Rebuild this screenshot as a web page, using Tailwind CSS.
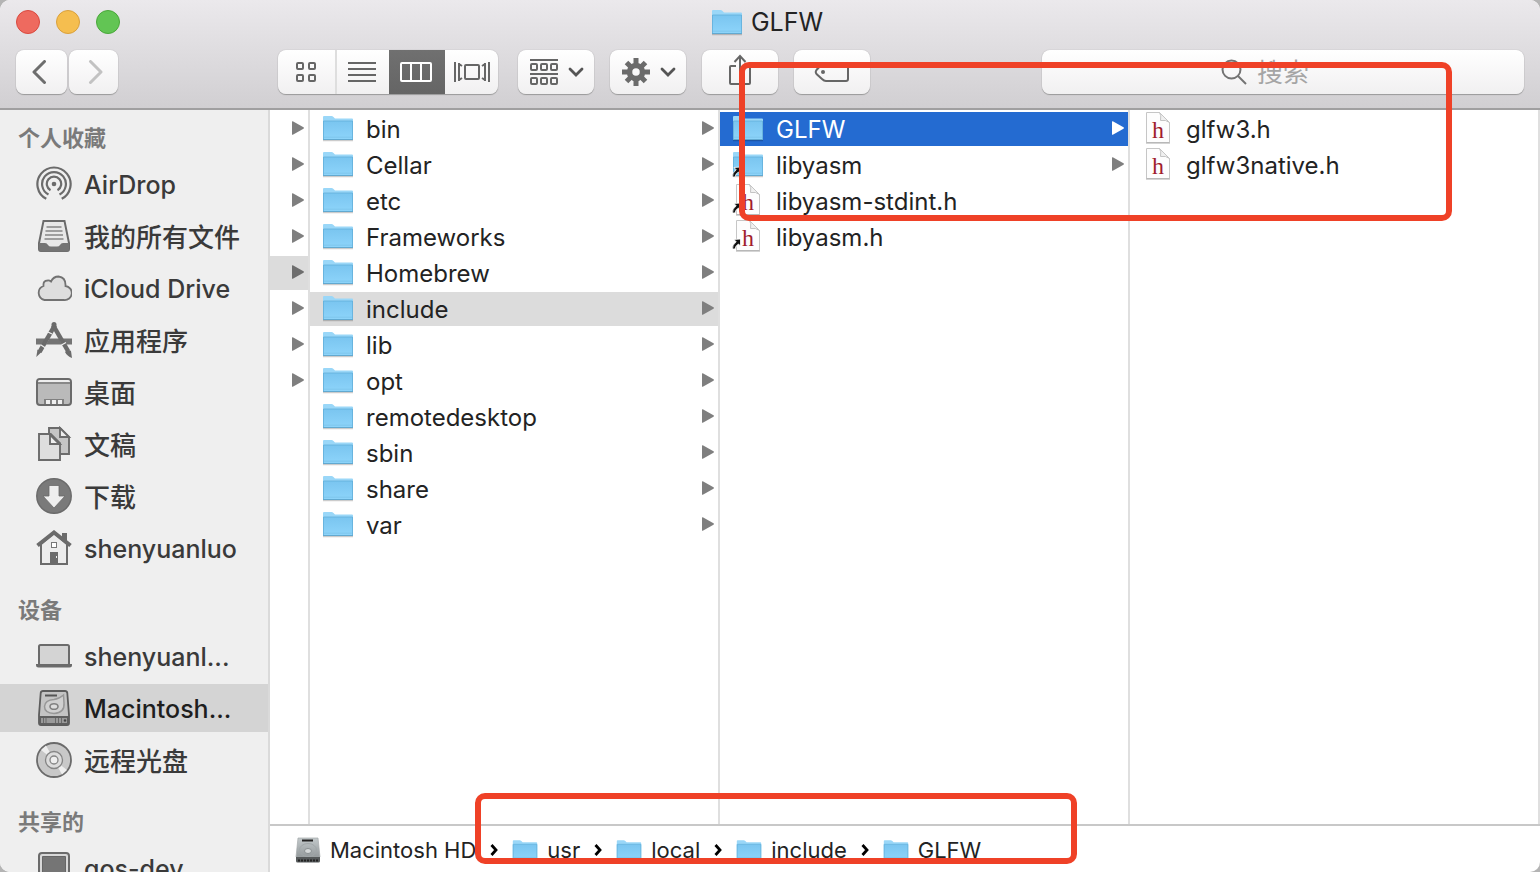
<!DOCTYPE html>
<html lang="zh-CN">
<head>
<meta charset="utf-8">
<title>GLFW</title>
<script src="https://cdn.jsdelivr.net/npm/@tailwindcss/browser@4"></script>
</head>
<body class="bg-[#b4b4b4] font-['Inter','Noto_Sans_CJK_SC',sans-serif] text-[#232323]">
<svg class="absolute size-0" aria-hidden="true">
  <defs>
    <linearGradient id="fg" x1="0" y1="0" x2="0" y2="1"><stop offset="0" stop-color="#7ac5f0"/><stop offset="1" stop-color="#8dd4fa"/></linearGradient>
    <linearGradient id="hdg" x1="0" y1="0" x2="0" y2="1"><stop offset="0" stop-color="#c3c9cb"/><stop offset="1" stop-color="#949a9c"/></linearGradient>
  </defs>
  <symbol id="folder" viewBox="0 0 32 28">
    <path d="M1 26.500H31" stroke="#000" stroke-opacity=".2" stroke-width="1.500"/>
    <path d="M1 3Q1 2 2 2H9.500Q10.500 2 11.500 3L13 4.500H30Q31 4.500 31 5.500V25H1Z" fill="#9ad7f8"/>
    <path d="M1 7H31V25.500H1Z" fill="url(#fg)"/>
    <path d="M1.500 25V7H30.500V25" fill="none" stroke="#62afd9" stroke-width=".8"/>
    <path d="M1 25.500H31" stroke="#62a9d0"/>
    <path d="M2 23.200H30" stroke="#78c1e9" stroke-width=".7"/>
  </symbol>
  <symbol id="hfile" viewBox="0 2 32 32">
    <path d="M4.500 2.500H17.500L27.500 12.500V32.500H4.500Z" fill="#fdfdfd" stroke="#c6c6c6"/>
    <path d="M4 33H28" stroke="#aaa" stroke-width="1"/>
    <path d="M17.500 2.500Q19.500 5 18.500 10.500Q24 9.500 27.500 12.500Z" fill="#f0f0f0" stroke="#c4c4c4"/>
    <text x="16" y="28" text-anchor="middle" font-family="Liberation Serif, serif" font-size="24" fill="#a01c2c">h</text>
  </symbol>
  <symbol id="alias" viewBox="0 0 10 12">
    <path d="M2 1.500L8.500 1V8L6.500 6Q3.500 7.500 3 11H.5Q0 7 4.200 3.800Z" fill="#111" stroke="#fff" stroke-width=".8"/>
  </symbol>
  <symbol id="tri" viewBox="0 0 12 14"><path d="M0 .8Q0 0 .8 .3L11.500 6.300Q12.300 7 11.500 7.700L.8 13.700Q0 14 0 13.200Z" fill="currentColor"/></symbol>
  <symbol id="down" viewBox="0 0 16 10"><path d="M2 2L8 8L14 2" fill="none" stroke="#555" stroke-width="2.800" stroke-linecap="round"/></symbol>
  <symbol id="crumb" viewBox="0 0 8 12"><path d="M1.500 1L6 6L1.500 11" fill="none" stroke="#000" stroke-width="2.800"/></symbol>
</svg>

<div class="relative flex h-screen flex-col overflow-hidden rounded-[10px] bg-white">
  <header class="flex shrink-0 flex-col border-b-2 border-[#a09fa0] bg-linear-to-b from-[#ebe9ec] to-[#d1cfd2] pb-3.5">
    <div class="flex h-11 items-center px-4">
      <div class="flex flex-1 gap-4">
        <button aria-label="关闭" class="size-6 rounded-full border border-[#d9493f] bg-[#ee6a5f]"></button>
        <button aria-label="最小化" class="size-6 rounded-full border border-[#d9a03c] bg-[#f5be4f]"></button>
        <button aria-label="缩放" class="size-6 rounded-full border border-[#49a73a] bg-[#62c554]"></button>
      </div>
      <h1 class="mr-1.5 flex items-center gap-2 pt-0.5 text-[25px]"><svg class="mb-0.5 h-7 w-8"><use href="#folder"/></svg>GLFW</h1>
      <div class="flex-1"></div>
    </div>
    <div class="mt-1.5 flex h-11 items-stretch px-4 *:shrink-0">
      <div class="flex gap-0.5 *:rounded-lg *:bg-linear-to-b *:from-white *:to-[#f1f0f1] *:shadow-[0_1px_1px_#999,0_0_1px_#999]">
        <button aria-label="后退" class="flex w-[51px] items-center justify-center"><svg class="h-6 w-5" viewBox="0 0 20 24" fill="none" stroke="#6e6e6e" stroke-width="3" stroke-linecap="round" stroke-linejoin="round"><path d="M12.500 1.500L2 12L12.500 22.500"/></svg></button>
        <button aria-label="前进" class="flex w-[49px] items-center justify-center"><svg class="h-6 w-5" viewBox="0 0 20 24" fill="none" stroke="#c2c2c2" stroke-width="3" stroke-linecap="round" stroke-linejoin="round"><path d="M6.500 1.500L17 12L6.500 22.500"/></svg></button>
      </div>
      <div class="ml-40 flex w-55 overflow-hidden rounded-lg bg-linear-to-b from-white to-[#f1f0f1] shadow-[0_1px_1px_#999,0_0_1px_#999]">
        <button aria-label="图标" class="flex w-[59px] items-center justify-center border-r-2 border-[#dedede] pr-0.5"><svg class="size-5" viewBox="0 0 20 20" fill="none" stroke="#666" stroke-width="2"><rect x="1" y="1" width="6" height="6" rx="1"/><rect x="13" y="1" width="6" height="6" rx="1"/><rect x="1" y="13" width="6" height="6" rx="1"/><rect x="13" y="13" width="6" height="6" rx="1"/></svg></button>
        <button aria-label="列表" class="flex w-[52px] items-center justify-center pr-0.5"><svg class="h-5 w-7" viewBox="0 0 28 20" stroke="#666" stroke-width="2"><path d="M0 1H28M0 7H28M0 13H28M0 19H28"/></svg></button>
        <button aria-label="分栏" aria-pressed="true" class="flex w-14 items-center justify-center bg-linear-to-b from-[#707070] to-[#656565] pr-0.5"><svg class="h-5 w-8" viewBox="0 0 32 20" fill="none" stroke="#fff" stroke-width="2"><rect x="1" y="1" width="30" height="18" rx="1"/><path d="M11 1V19M21 1V19"/></svg></button>
        <button aria-label="封面流" class="flex flex-1 items-center justify-center"><svg class="h-5 w-9" viewBox="0 0 36 20" fill="none" stroke="#666" stroke-width="2"><path d="M1 0V20M35 0V20M5 1V19M31 1V19M5 2L8 4M5 18L8 16M31 2L28 4M31 18L28 16"/><rect x="11" y="3" width="14" height="14" rx="1"/></svg></button>
      </div>
      <div class="ml-5 flex gap-4 *:flex *:w-[76px] *:items-center *:rounded-lg *:bg-linear-to-b *:from-white *:to-[#f1f0f1] *:shadow-[0_1px_1px_#999,0_0_1px_#999]">
        <button aria-label="排列" class="gap-2.5 pl-3"><svg class="h-[26px] w-7" viewBox="0 0 28 26" fill="none" stroke="#666" stroke-width="2"><path d="M0 1H28M0 15H28"/><rect x="1" y="5" width="6" height="6" rx="1"/><rect x="11" y="5" width="6" height="6" rx="1"/><rect x="21" y="5" width="6" height="6" rx="1"/><rect x="1" y="19" width="6" height="6" rx="1"/><rect x="11" y="19" width="6" height="6" rx="1"/><rect x="21" y="19" width="6" height="6" rx="1"/></svg><svg class="h-2.5 w-4"><use href="#down"/></svg></button>
        <button aria-label="操作" class="gap-2.5 pl-3"><svg class="size-7" viewBox="-14 -14 28 28"><g fill="none" stroke="#6b6b6b"><path stroke-width="5" d="M0 -14V-7M0 14V7M-14 0H-7M14 0H7M-9.500 -9.500L-5 -5M9.500 9.500L5 5M-9.500 9.500L-5 5M9.500 -9.500L5 -5"/><circle r="6.500" stroke-width="5.500"/></g></svg><svg class="h-2.5 w-4"><use href="#down"/></svg></button>
        <button aria-label="共享" class="justify-center"><svg class="mb-1 h-8 w-6" viewBox="0 0 24 32" fill="none" stroke="#666" stroke-width="2"><path d="M8 12H3Q2 12 2 13V29Q2 30 3 30H21Q22 30 22 29V13Q22 12 21 12H16M12 21V2M6.500 8L12 2L17.500 8"/></svg></button>
        <button aria-label="标记" class="justify-center"><svg class="h-5 w-9" viewBox="0 0 36 20" fill="none" stroke="#666" stroke-width="2"><path d="M10 1H32Q34 1 34 3V17Q34 19 32 19H12Q10 19 8 17L2.500 12Q1 10 2.500 8L8 2Q9 1 10 1Z"/><circle cx="9" cy="10" r="2" fill="#666" stroke="none"/></svg></button>
      </div>
      <div class="flex-1"></div>
      <label class="flex w-[482px] items-center justify-center gap-2.5 rounded-lg bg-linear-to-b from-white to-[#f1f0f1] shadow-[0_1px_1px_#999,0_0_1px_#999]">
        <svg class="size-[26px]" viewBox="0 0 26 26" fill="none" stroke="#737373" stroke-width="2"><circle cx="10.500" cy="10.500" r="9"/><path d="M17 17L25 25"/></svg>
        <input type="search" aria-label="搜索" placeholder="搜索" class="h-9 w-[88px] bg-transparent text-[26px] outline-none placeholder:text-[#a5a5a5]">
      </label>
    </div>
  </header>

  <div class="flex min-h-0 flex-1">
    <nav aria-label="边栏" class="w-[270px] shrink-0 overflow-hidden border-r-2 border-[#dadada] bg-[#efefef] pt-4 text-[#3a3a3a] [&_h2]:mb-2.5 [&_h2]:h-6 [&_h2]:pl-[18px] [&_h2]:text-[22px] [&_h2]:leading-6 [&_h2]:font-bold [&_h2]:text-[#7a7a7a] [&_a]:flex [&_a]:h-12 [&_a]:items-center [&_a]:gap-3 [&_a]:pt-1 [&_a]:pl-9 [&_a]:text-[25px] [&_a]:font-medium [&_ul]:flex [&_ul]:flex-col [&_ul]:gap-1 [&_svg]:mb-1 [&_svg]:size-9 [&_svg]:shrink-0 [&_span]:mb-0.5 [&_span]:text-[26px]">
      <h2>个人收藏</h2>
      <ul>
        <li><a href="#airdrop"><svg viewBox="0 0 36 36" fill="none" stroke="#6b6b6b" stroke-width="2.200"><path d="M10.300 32.800A16.600 16.600 0 1 1 25.700 32.800M12.500 28.500A11.900 11.900 0 1 1 23.500 28.500M14.500 24.200A7.200 7.200 0 1 1 21.500 24.200"/><circle cx="18" cy="18" r="2.300" fill="#6b6b6b" stroke="none"/></svg>AirDrop</a></li>
        <li><a href="#all"><svg viewBox="0 0 36 36"><path d="M7.500 3H28.500L33 25V31Q33 33 31 33H5Q3 33 3 31V25Z" fill="#e8e8e8" stroke="#6b6b6b" stroke-width="2"/><path d="M3 25H9Q11 25 12 27Q13 28.500 15 28.500H21Q23 28.500 24 27Q25 25 27 25H33V31Q33 33.500 31 33.500H5Q3 33.500 3 31Z" fill="#747474"/><path d="M10.500 9H25.500M9.500 13H26.500M9 17H27M8.500 21H27.500" stroke="#858585" stroke-width="1.600"/></svg><span>我的所有文件</span></a></li>
        <li><a href="#icloud"><svg viewBox="0 0 36 36"><path d="M8.500 30A7.300 7.300 0 0 1 7.500 16Q7 10.500 11.500 10.500Q13.500 10.300 15 11.500Q17.500 6.500 22.500 6.500Q30 7.500 29.500 16A7 7 0 0 1 28 30Z" fill="#dedede" stroke="#727272" stroke-width="1.800"/></svg>iCloud Drive</a></li>
        <li><a href="#apps"><svg viewBox="0 0 36 36"><path d="M0 16.500H10L7 22.500H0ZM13.500 16.500H23L26 22.500H10ZM26 16.500H36V22.500H30Z" fill="#747474"/><path d="M19 3L3.500 30" stroke="#6b6b6b" stroke-width="4.500"/><path d="M17 3L32 29" stroke="#6b6b6b" stroke-width="4.500"/><path d="M12 10L16 12M5 23L9.500 26M25.500 23L30 20.500" stroke="#efefef" stroke-width="1.300"/><path d="M1.500 27.500L5.500 30L.3 35Z" fill="#6b6b6b"/><path d="M29 30Q32 26.500 35 29L36 36Q31 34 29 30Z" fill="#6b6b6b"/><circle cx="18" cy="2.500" r="2.500" fill="#6b6b6b"/></svg><span>应用程序</span></a></li>
        <li><a href="#desktop"><svg viewBox="0 0 36 36"><rect x="1" y="5" width="34" height="26" rx="3" fill="#bababa" stroke="#6b6b6b" stroke-width="2"/><path d="M2 8Q2 6 4 6H32Q34 6 34 8Z" fill="#eee"/><path d="M2 9H34" stroke="#777" stroke-width="1.500"/><path d="M8 25H28V30H8Z" fill="#808080"/><path d="M10 26H14V30H10ZM16 26H20V30H16ZM22 26H26V30H22Z" fill="#eee"/></svg><span>桌面</span></a></li>
        <li><a href="#docs"><svg viewBox="0 0 36 36" stroke="#6b6b6b" stroke-width="1.900"><path d="M13 2H24L33 11V28H13Z" fill="#c5c5c5"/><path d="M24 2V11H33Z" fill="#eee"/><path d="M3 8H14L24 18V34H3Z" fill="#dedede"/><path d="M14 8V18H24Z" fill="#eee"/><path d="M14 8L24 18" stroke-width="3"/></svg><span>文稿</span></a></li>
        <li><a href="#downloads"><svg viewBox="0 0 36 36"><circle cx="18" cy="18" r="17.200" fill="#7a7a7a" stroke="#6b6b6b" stroke-width="1.500"/><path d="M13 7.500H23V18H29L18 30L7 18H13Z" fill="#efefef" stroke="#6b6b6b" stroke-width=".8"/></svg><span>下载</span></a></li>
        <li><a href="#home"><svg viewBox="0 0 36 36"><path d="M5 14V34H31V14L18 3Z" fill="#ececec" stroke="#6b6b6b" stroke-width="2"/><path d="M26 3H31V13L26 8Z" fill="#6b6b6b"/><path d="M1.500 15.500L18 2.500L34.500 15.500" fill="none" stroke="#6b6b6b" stroke-width="4"/><rect x="15.500" y="12.500" width="5" height="5" fill="#fff" stroke="#777"/><path d="M14 22H22V34H14Z" fill="#6b6b6b"/><path d="M20.500 26V28" stroke="#eee"/></svg>shenyuanluo</a></li>
      </ul>
      <h2 class="mt-[26px]">设备</h2>
      <ul>
        <li><a href="#mac"><svg viewBox="0 0 36 36"><rect x="3" y="7" width="30" height="20" rx="1.500" fill="#d4d4d4" stroke="#6b6b6b" stroke-width="2"/><path d="M0 26H36V27Q36 29.500 33.500 29.500H2.500Q0 29.500 0 27Z" fill="#6b6b6b"/></svg>shenyuanl...</a></li>
        <li><a href="#hd" aria-current="page" class="bg-[#d4d4d4] text-[#1e1e1e]"><svg viewBox="0 0 36 36"><path d="M7 1H29Q31 1 31.300 3L33 25V33Q33 35 31 35H5Q3 35 3 33V25L4.700 3Q5 1 7 1Z" fill="#c4c4c4" stroke="#5c5c5c" stroke-width="1.800"/><path d="M3 26H33V33Q33 35 31 35H5Q3 35 3 33Z" fill="#5f5f5f"/><path d="M5 30.500H31" stroke="#9a9a9a" stroke-width="5"/><path d="M7.500 28V33M10 28V33M19.500 28V33M22.500 28V33M25.500 28V33" stroke="#6a6a6a"/><circle cx="29" cy="30.500" r="1.200" fill="#444"/><path d="M9 5.500H21" stroke="#555" stroke-width="2"/><path d="M27.500 5L28 13Q29 22.500 18 23.500Q8.500 23 8.500 16.500Q9 10 18 9.500Q23 9 27.500 5Z" fill="#d0d0d0" stroke="#979797" stroke-width="1.500"/><ellipse cx="18" cy="16.500" rx="4" ry="2.800" fill="#ddd" stroke="#808080" stroke-width="1.600"/></svg>Macintosh...</a></li>
        <li><a href="#disc"><svg viewBox="0 0 36 36"><circle cx="18" cy="18" r="17" fill="#c8c8c8" stroke="#6b6b6b" stroke-width="1.800"/><path d="M18 18L5 8L10 3.500ZM18 18L31 28L26 32.500Z" fill="#eee"/><circle cx="18" cy="18" r="8.500" fill="#dcdcdc" stroke="#858585" stroke-width="1.300"/><circle cx="18" cy="18" r="4" fill="#eee" stroke="#858585" stroke-width="1.300"/></svg><span>远程光盘</span></a></li>
      </ul>
      <h2 class="mt-[26px]">共享的</h2>
      <ul>
        <li><a href="#qos"><svg viewBox="0 0 36 36"><rect x="3" y="3" width="30" height="36" rx="3" fill="#d8d8d8" stroke="#6b6b6b" stroke-width="2"/><path d="M6.500 6.500H29.500V36H6.500Z" fill="#757575" stroke="#666"/></svg>qos-dev</a></li>
      </ul>
    </nav>

    <main class="flex min-w-0 flex-1 flex-col">
      <div class="flex min-h-0 flex-1 text-2xl [&_li]:flex [&_li]:h-[34px] [&_li]:items-center [&_ul]:flex [&_ul]:flex-col [&_ul]:gap-0.5 [&_ul]:border-r-2 [&_ul]:border-[#dfdfdf] [&_ul]:pt-0.5 [&_button]:flex [&_button]:flex-1 [&_button]:items-center [&_button]:gap-3 [&_button]:pt-0.5 [&_button]:pr-1 [&_button]:pl-3">
        <ul class="w-10 shrink-0 text-[#7f7f7f] [&_li]:justify-end [&_li]:pr-1 [&_svg]:mb-0.5 [&_svg]:h-3.5 [&_svg]:w-3">
          <li><svg><use href="#tri"/></svg></li>
          <li><svg><use href="#tri"/></svg></li>
          <li><svg><use href="#tri"/></svg></li>
          <li><svg><use href="#tri"/></svg></li>
          <li class="bg-[#dcdcdc] text-[#6e6e6e]"><svg><use href="#tri"/></svg></li>
          <li><svg><use href="#tri"/></svg></li>
          <li><svg><use href="#tri"/></svg></li>
          <li><svg><use href="#tri"/></svg></li>
        </ul>
        <ul class="flex-1 [&_button>svg:first-child]:mb-1 [&_button>svg:first-child]:h-7 [&_button>svg:first-child]:w-8 [&_button>svg:last-child]:mb-1 [&_button>svg:last-child]:ml-auto [&_button>svg:last-child]:h-3.5 [&_button>svg:last-child]:w-3 [&_button>svg:last-child]:text-[#7f7f7f]">
          <li><button><svg><use href="#folder"/></svg>bin<svg><use href="#tri"/></svg></button></li>
          <li><button><svg><use href="#folder"/></svg>Cellar<svg><use href="#tri"/></svg></button></li>
          <li><button><svg><use href="#folder"/></svg>etc<svg><use href="#tri"/></svg></button></li>
          <li><button><svg><use href="#folder"/></svg>Frameworks<svg><use href="#tri"/></svg></button></li>
          <li><button><svg><use href="#folder"/></svg>Homebrew<svg><use href="#tri"/></svg></button></li>
          <li class="bg-[#dcdcdc]"><button><svg><use href="#folder"/></svg>include<svg><use href="#tri"/></svg></button></li>
          <li><button><svg><use href="#folder"/></svg>lib<svg><use href="#tri"/></svg></button></li>
          <li><button><svg><use href="#folder"/></svg>opt<svg><use href="#tri"/></svg></button></li>
          <li><button><svg><use href="#folder"/></svg>remotedesktop<svg><use href="#tri"/></svg></button></li>
          <li><button><svg><use href="#folder"/></svg>sbin<svg><use href="#tri"/></svg></button></li>
          <li><button><svg><use href="#folder"/></svg>share<svg><use href="#tri"/></svg></button></li>
          <li><button><svg><use href="#folder"/></svg>var<svg><use href="#tri"/></svg></button></li>
        </ul>
        <ul class="flex-1">
          <li class="bg-[#246bd1] text-white"><button><svg class="mb-1 h-7 w-8"><use href="#folder"/></svg>GLFW<svg class="mb-1 ml-auto h-3.5 w-3"><use href="#tri"/></svg></button></li>
          <li><button><span class="relative mb-1"><svg class="h-7 w-8"><use href="#folder"/></svg><svg class="absolute bottom-0 left-0 h-3 w-2.5"><use href="#alias"/></svg></span>libyasm<svg class="mb-1 ml-auto h-3.5 w-3 text-[#7f7f7f]"><use href="#tri"/></svg></button></li>
          <li><button><span class="relative mb-1"><svg class="size-8"><use href="#hfile"/></svg><svg class="absolute bottom-0.5 left-0 h-3 w-2.5"><use href="#alias"/></svg></span>libyasm-stdint.h</button></li>
          <li><button><span class="relative mb-1"><svg class="size-8"><use href="#hfile"/></svg><svg class="absolute bottom-0.5 left-0 h-3 w-2.5"><use href="#alias"/></svg></span>libyasm.h</button></li>
        </ul>
        <ul class="flex-1">
          <li><button><svg class="mb-1 size-8"><use href="#hfile"/></svg>glfw3.h</button></li>
          <li><button><svg class="mb-1 size-8"><use href="#hfile"/></svg>glfw3native.h</button></li>
        </ul>
      </div>
      <footer class="flex h-12 shrink-0 items-center gap-3.5 border-t-2 border-[#c8c8c8] pt-0.5 pl-[25px] text-[22px] [&_a]:flex [&_a]:items-center [&_a]:gap-[9px]">
        <a href="#hd"><svg class="size-[26px]" viewBox="0 0 26 26"><path d="M3 1H23L25 20H1Z" fill="url(#hdg)" stroke="#a5a9aa" stroke-width=".7"/><path d="M1 20H25V24Q25 25.500 23.500 25.500H2.500Q1 25.500 1 24Z" fill="#55595a"/><path d="M3 23.500H23" stroke="#222" stroke-width="2" stroke-dasharray="2 1"/><path d="M7 3.500H18" stroke="#222" stroke-width="2"/><ellipse cx="13" cy="13" rx="8.500" ry="6.500" fill="none" stroke="#a1a7a9"/><ellipse cx="13" cy="14" rx="3.500" ry="2.500" fill="#d5d9da" stroke="#8a9092"/></svg>Macintosh HD</a>
        <svg class="h-3 w-2"><use href="#crumb"/></svg>
        <a href="#usr"><svg class="h-6 w-[26px]"><use href="#folder"/></svg>usr</a>
        <svg class="h-3 w-2"><use href="#crumb"/></svg>
        <a href="#local"><svg class="h-6 w-[26px]"><use href="#folder"/></svg>local</a>
        <svg class="h-3 w-2"><use href="#crumb"/></svg>
        <a href="#include"><svg class="h-6 w-[26px]"><use href="#folder"/></svg>include</a>
        <svg class="h-3 w-2"><use href="#crumb"/></svg>
        <a href="#glfw"><svg class="h-6 w-[26px]"><use href="#folder"/></svg>GLFW</a>
      </footer>
    </main>
  </div>

  <div class="pointer-events-none absolute top-[62px] left-[739px] h-[159px] w-[713px] rounded-[10px] border-6 border-[#ef4127]"></div>
  <div class="pointer-events-none absolute top-[793px] left-[475px] h-[71px] w-[602px] rounded-[10px] border-6 border-[#ef4127]"></div>
</div>
</body>
</html>
